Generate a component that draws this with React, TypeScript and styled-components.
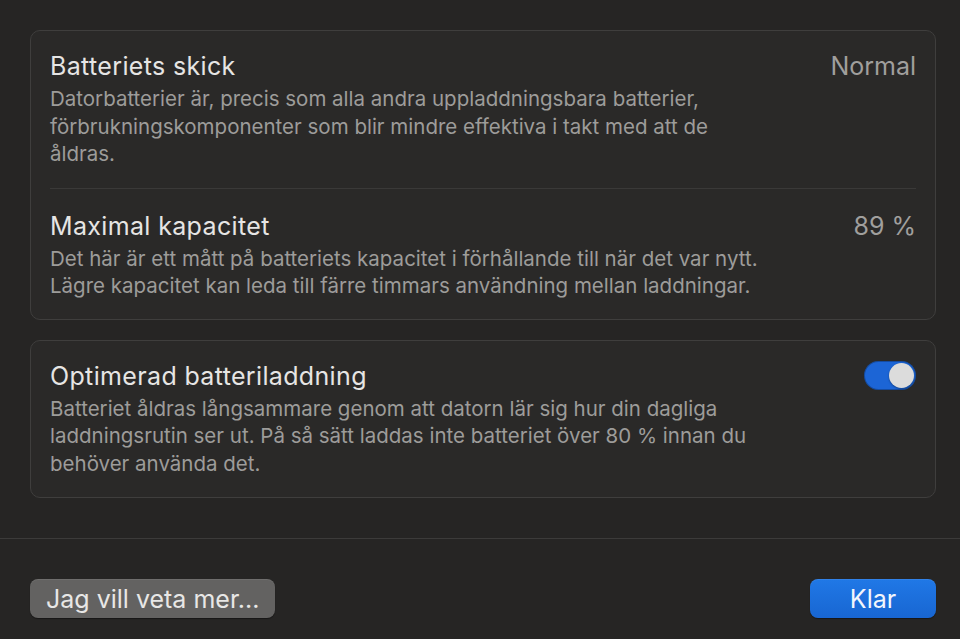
import React, { useState } from 'react';
import styled, { createGlobalStyle } from 'styled-components';

const GlobalStyle = createGlobalStyle`
  html, body {
    margin: 0;
    padding: 0;
    background: #262524;
  }
  body {
    font-family: Inter, "Noto Sans", "Liberation Sans", sans-serif;
    -webkit-font-smoothing: antialiased;
  }
`;

type Item = {
  title: string;
  value?: string;
  lines: string[];
};

const HEALTH: Item[] = [
  {
    title: 'Batteriets skick',
    value: 'Normal',
    lines: [
      'Datorbatterier är, precis som alla andra uppladdningsbara batterier,',
      'förbrukningskomponenter som blir mindre effektiva i takt med att de',
      'åldras.',
    ],
  },
  {
    title: 'Maximal kapacitet',
    value: '89 %',
    lines: [
      'Det här är ett mått på batteriets kapacitet i förhållande till när det var nytt.',
      'Lägre kapacitet kan leda till färre timmars användning mellan laddningar.',
    ],
  },
];

const OPTIMIZED: Item = {
  title: 'Optimerad batteriladdning',
  lines: [
    'Batteriet åldras långsammare genom att datorn lär sig hur din dagliga',
    'laddningsrutin ser ut. På så sätt laddas inte batteriet över 80 % innan du',
    'behöver använda det.',
  ],
};

const Description: React.FC<{ lines: string[] }> = ({ lines }) => (
  <Desc>
    {lines.map((l, i) => (
      <span key={i}>{l}</span>
    ))}
  </Desc>
);

const App: React.FC = () => {
  const [optimized, setOptimized] = useState(true);

  return (
    <>
      <GlobalStyle />
      <Sheet>
        <Content>
          <Card>
            {HEALTH.map((item, i) => (
              <Row key={item.title} $divider={i > 0}>
                <Head>
                  <Title>{item.title}</Title>
                  <Value>{item.value}</Value>
                </Head>
                <Description lines={item.lines} />
              </Row>
            ))}
          </Card>
          <Card>
            <Row>
              <Head>
                <Title>{OPTIMIZED.title}</Title>
                <Toggle $on={optimized} onClick={() => setOptimized(!optimized)}>
                  <Knob $on={optimized} />
                </Toggle>
              </Head>
              <Description lines={OPTIMIZED.lines} />
            </Row>
          </Card>
        </Content>
        <Footer>
          <Button>Jag vill veta mer...</Button>
          <Button $primary>Klar</Button>
        </Footer>
      </Sheet>
    </>
  );
};

const Sheet = styled.div`
  width: 960px;
  height: 639px;
  display: flex;
  flex-direction: column;
  background: #262524;
  overflow: hidden;
`;

const Content = styled.div`
  display: flex;
  flex-direction: column;
  gap: 20px;
  padding: 30px 24px 40px 30px;
  border-bottom: 1px solid #3c3b3a;
`;

const Card = styled.div`
  display: flex;
  flex-direction: column;
  padding: 0 19px;
  background: #2a2928;
  border: 1px solid #3f3e3d;
  border-radius: 10px;
`;

const Row = styled.div<{ $divider?: boolean }>`
  display: flex;
  flex-direction: column;
  gap: 5px;
  padding: ${({ $divider }) => ($divider ? '23px 0 19px' : '21px 0 20px')};
  border-top: ${({ $divider }) => ($divider ? '1px solid #3a3938' : 'none')};
`;

const Head = styled.div`
  display: flex;
  align-items: center;
  justify-content: space-between;
  height: 28px;
`;

const Title = styled.div`
  font-size: 25px;
  line-height: 28px;
  color: #e6e5e4;
  letter-spacing: 0.35px;
`;

const Value = styled.div`
  font-size: 25px;
  line-height: 28px;
  color: #a09f9d;
`;

const Desc = styled.div`
  display: flex;
  flex-direction: column;
  font-size: 20.5px;
  line-height: 27.5px;
  color: #9d9c9a;
  white-space: nowrap;
`;

const Toggle = styled.div<{ $on: boolean }>`
  width: 52px;
  height: 29px;
  box-sizing: border-box;
  padding: 2px;
  display: flex;
  justify-content: ${({ $on }) => ($on ? 'flex-end' : 'flex-start')};
  align-items: center;
  border-radius: 15px;
  background: ${({ $on }) => ($on ? '#1c65d6' : '#4a4948')};
  box-shadow: inset 0 0 0 1px rgba(0, 0, 0, 0.25);
  cursor: pointer;
`;

const Knob = styled.div<{ $on: boolean }>`
  width: 25px;
  height: 25px;
  border-radius: 50%;
  background: #dcdcdc;
  box-shadow: 0 1px 2px rgba(0, 0, 0, 0.35);
`;

const Footer = styled.div`
  display: flex;
  justify-content: space-between;
  align-items: center;
  padding: 40px 24px 0 30px;
`;

const Button = styled.button<{ $primary?: boolean }>`
  height: 39px;
  min-width: ${({ $primary }) => ($primary ? '126px' : '244px')};
  padding: 0 16px;
  border: none;
  border-radius: 8px;
  font-family: inherit;
  font-size: 25px;
  color: ${({ $primary }) => ($primary ? '#f2f6fc' : '#e8e7e6')};
  background: ${({ $primary }) =>
    $primary ? 'linear-gradient(#2078e6, #1866d2)' : '#636261'};
  box-shadow: 0 1px 1px rgba(0, 0, 0, 0.4), inset 0 1px 0 rgba(255, 255, 255, 0.08);
  cursor: pointer;
`;

export default App;
